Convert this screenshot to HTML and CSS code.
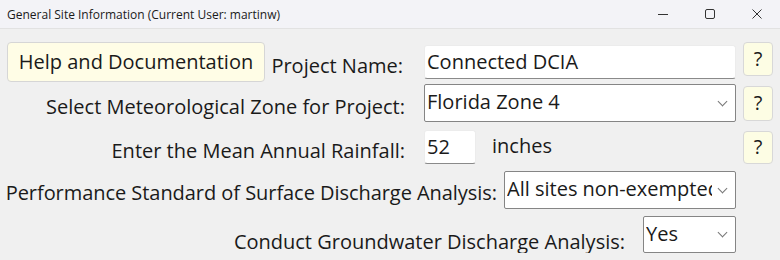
FILE: index.html
```html
<!DOCTYPE html>
<html>
<head>
<meta charset="utf-8">
<title>General Site Information</title>
<link rel="stylesheet" href="styles.css">
</head>
<body>

<div class="titlebar">
	<span class="title">General Site Information (Current User: martinw)</span>
	<div class="winbtns">
		<svg class="wb" width="12" height="12" viewBox="0 0 12 12"><path d="M1 6.5h10" stroke="#333" stroke-width="1"/></svg>
		<svg class="wb" width="12" height="12" viewBox="0 0 12 12"><rect x="1.5" y="1.5" width="9" height="9" rx="1.5" fill="none" stroke="#333" stroke-width="1"/></svg>
		<svg class="wb" width="12" height="12" viewBox="0 0 12 12"><path d="M1.5 1.5l9 9M10.5 1.5l-9 9" stroke="#333" stroke-width="1"/></svg>
	</div>
</div>

<div class="form">
	<div class="row row1">
		<div class="helpbtn">Help and Documentation</div>
		<span class="label lbl1">Project Name:</span>
		<div class="entry wide">Connected DCIA</div>
		<div class="qbtn q1">?</div>
	</div>

	<div class="row row2">
		<span class="label">Select Meteorological Zone for Project:</span>
		<div class="combo wide"><span class="val">Florida Zone 4</span><span class="arrow"></span></div>
		<div class="qbtn">?</div>
	</div>

	<div class="row row3">
		<span class="label">Enter the Mean Annual Rainfall:</span>
		<div class="entry short">52</div>
		<span class="unit">inches</span>
		<div class="qbtn q3">?</div>
	</div>

	<div class="row row4">
		<span class="label lbl4">Performance Standard of Surface Discharge Analysis:</span>
		<div class="combo mid"><span class="val">All sites non-exempted</span><span class="arrow"></span></div>
		<div class="spacer"></div>
	</div>

	<div class="row row5">
		<span class="label lbl5">Conduct Groundwater Discharge Analysis:</span>
		<div class="combo small"><span class="val">Yes</span><span class="arrow"></span></div>
		<div class="spacer"></div>
	</div>
</div>

</body>
</html>
```
FILE: styles.css
```css
body {
	margin: 0;
	background-color: #f0f0f0;
	font-family: "Open Sans", "Noto Sans", sans-serif;
	color: #1a1a1a;
}

/* Fensterleiste oben */
.titlebar {
	height: 28px;
	background-color: #f3f3f7;
	border-bottom: 1px solid #e2e2e2;
	display: flex;
	align-items: center;
	padding-left: 7px;
}
.title {
	font-size: 12px;
	color: #1a1a1a;
}
.winbtns {
	margin-left: auto;
	display: flex;
	align-items: center;
	padding-right: 17px;
}
.wb {
	margin-left: 35px;
}

.form {
	padding-top: 13px;
}

.row {
	display: flex;
	align-items: center;
	justify-content: flex-end;
	padding: 0 7px;
}
.row1 { height: 40px; }
.row2 { height: 38px; margin-top: 2px; }
.row3 { height: 34px; margin-top: 8px; }
.row4 { height: 38px; margin-top: 7px; }
.row5 { height: 37px; margin-top: 7px; }

/* Beschriftungen rechtsbündig vor dem Feld */
.label {
	font-size: 20px;
	white-space: nowrap;
	margin-right: 19px;
	margin-top: 8px;
	line-height: 28px;
}
.lbl1 { margin-right: 21px; }
.lbl4 { margin-right: 7px; margin-top: 6px; letter-spacing: -0.05px; }
.lbl5 { margin-right: 18px; margin-top: 14px; }

.helpbtn {
	margin-right: auto;
	height: 38px;
	width: 256px;
	background-color: #fffde6;
	border: 1px solid #d6d6d6;
	border-radius: 4px;
	font-size: 20px;
	line-height: 38px;
	text-align: center;
	white-space: nowrap;
}

.entry, .combo, .qbtn, .spacer, .unit {
	flex-shrink: 0;
}

.entry {
	box-sizing: border-box;
	height: 34px;
	background-color: #fff;
	border: 1px solid #ececec;
	border-bottom: 1px solid #8a8a8a;
	border-radius: 3px;
	font-size: 20px;
	line-height: 31px;
	padding-left: 2px;
	white-space: nowrap;
}
.wide { width: 312px; }
.short { width: 52px; }
.mid { width: 232px; }
.small { width: 93px; }

.unit {
	width: 260px;
	box-sizing: border-box;
	padding-left: 16px;
	font-size: 20px;
	line-height: 28px;
	margin-bottom: 2px;
}

.combo {
	box-sizing: border-box;
	height: 38px;
	background-color: #fff;
	border: 1px solid #858585;
	border-radius: 2px;
	display: flex;
	align-items: center;
	padding-left: 2px;
	font-size: 20px;
}
.small { height: 37px; }
.val {
	flex: 1;
	overflow: hidden;
	white-space: nowrap;
	line-height: 28px;
	margin-top: -2px;
}
.arrow {
	width: 6px;
	height: 6px;
	border-right: 1px solid #777;
	border-bottom: 1px solid #777;
	transform: rotate(45deg);
	margin: -4px 9px 0 7px;
}

.qbtn {
	box-sizing: border-box;
	width: 30px;
	height: 35px;
	margin-left: 7px;
	background-color: #fdfde4;
	border: 1px solid #d8d8d8;
	border-radius: 4px;
	font-size: 20px;
	text-align: center;
	line-height: 31px;
}
.q1 { align-self: flex-start; height: 34px; }
.q3 { height: 33px; line-height: 30px; }

.spacer {
	width: 30px;
	margin-left: 7px;
}
```
